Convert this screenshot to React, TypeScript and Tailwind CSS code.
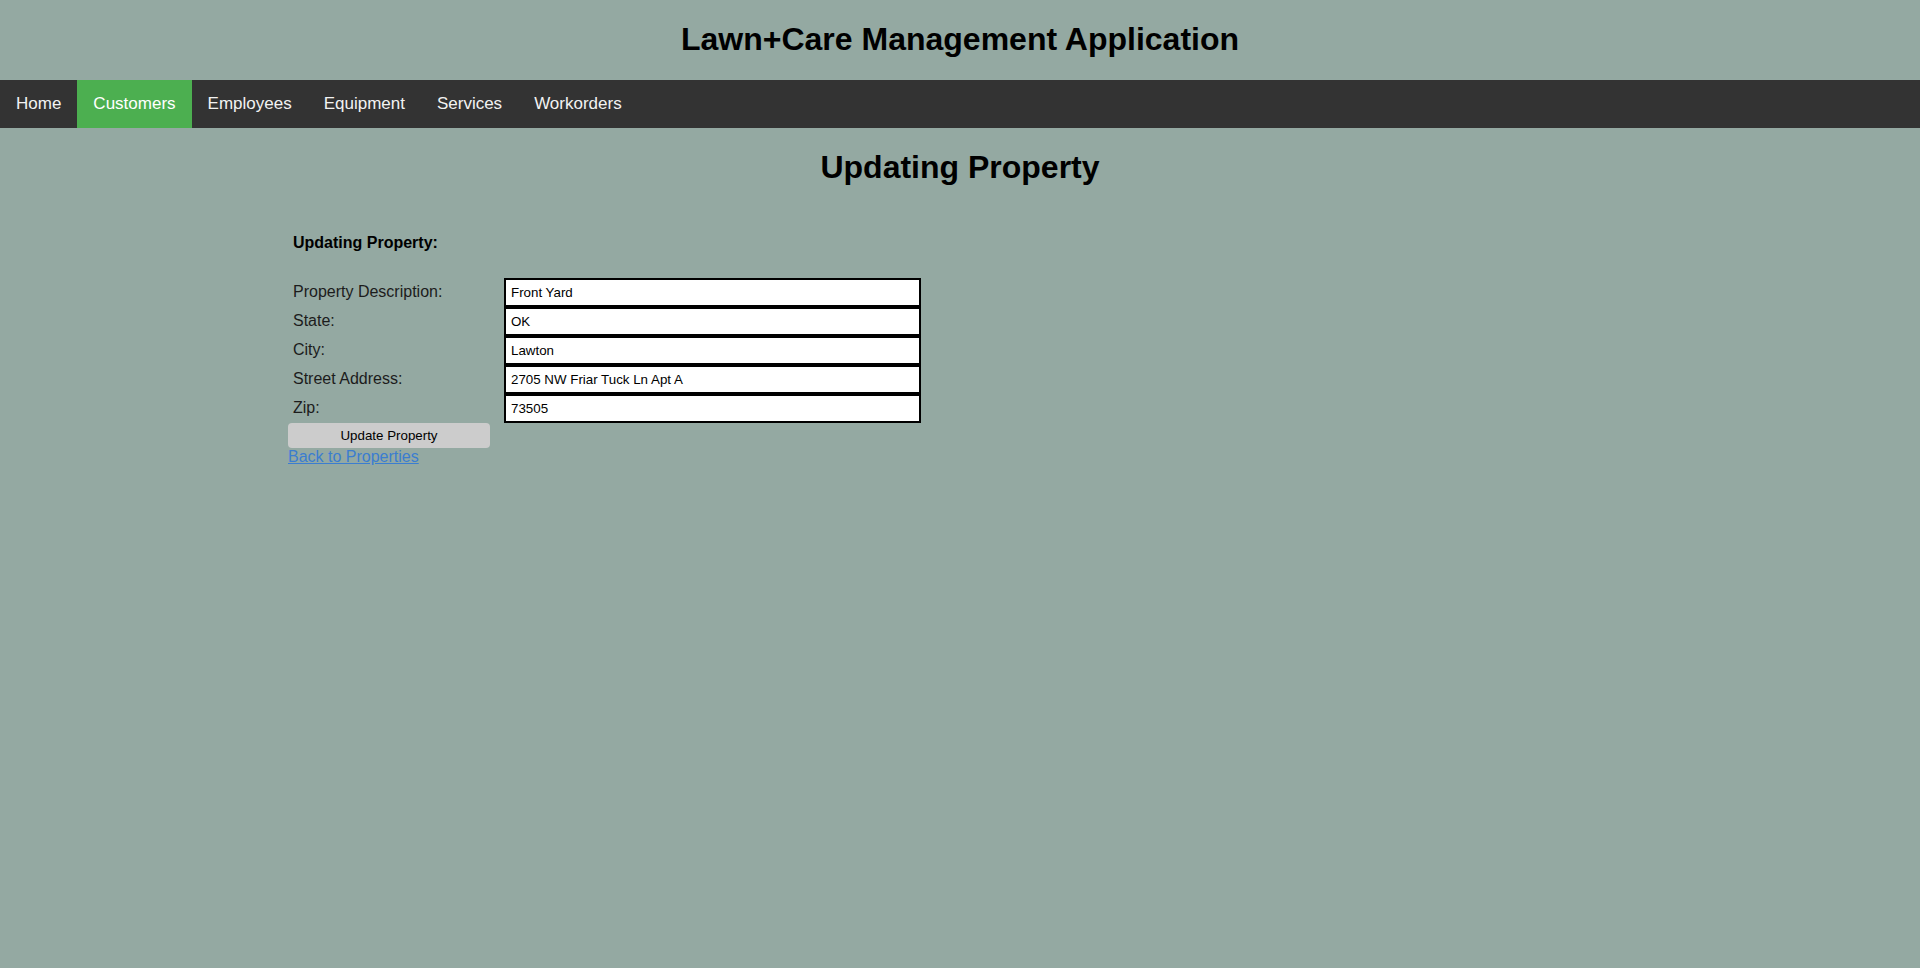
import React from 'react'

const links = ['Home', 'Customers', 'Employees', 'Equipment', 'Services', 'Workorders']

const fields = [
  { label: 'Property Description:', value: 'Front Yard' },
  { label: 'State:', value: 'OK' },
  { label: 'City:', value: 'Lawton' },
  { label: 'Street Address:', value: '2705 NW Friar Tuck Ln Apt A' },
  { label: 'Zip:', value: '73505' },
]

export default function App() {
  return (
    <div className="min-h-screen bg-[#94a9a2] text-black font-['Liberation_Sans',Arial,sans-serif]">
      {/* header */}
      <h1 className="pt-[21px] pb-[22px] text-center text-[32px] leading-[37px] font-bold">
        Lawn+Care Management Application
      </h1>

      {/* nav */}
      <nav className="flex bg-[#333333]">
        {links.map((l) => (
          <a
            key={l}
            href="#"
            className={
              'px-4 py-[14px] text-[17px] leading-[20px] text-[#f2f2f2] ' +
              (l === 'Customers' ? 'bg-[#4caf50] text-white' : '')
            }
          >
            {l}
          </a>
        ))}
      </nav>

      <h1 className="mt-[21px] text-center text-[32px] leading-[37px] font-bold">Updating Property</h1>

      {/* form */}
      <div className="ml-[288px] mt-[48px]">
        <p className="pl-[5px] text-[16px] leading-[18px] font-bold">Updating Property:</p>
        <div className="mt-[26px] grid grid-cols-[216px_417px]">
          {fields.map((f) => (
            <React.Fragment key={f.label}>
              <label className="flex h-[29px] items-center pb-[2px] pl-[5px] text-[16px] text-[#1c1c1c]">{f.label}</label>
              <input
                defaultValue={f.value}
                className="h-[29px] border-2 border-black bg-white px-[5px] text-[13.33px] text-black outline-none"
              />
            </React.Fragment>
          ))}
        </div>
        <button className="block h-[25px] w-[202px] rounded-[4px] bg-[#cccccc] text-[13.33px] text-black">
          Update Property
        </button>
        <a href="#" className="block w-fit text-[16px] leading-[18px] text-[#3b7dd0] underline">
          Back to Properties
        </a>
      </div>
    </div>
  )
}
